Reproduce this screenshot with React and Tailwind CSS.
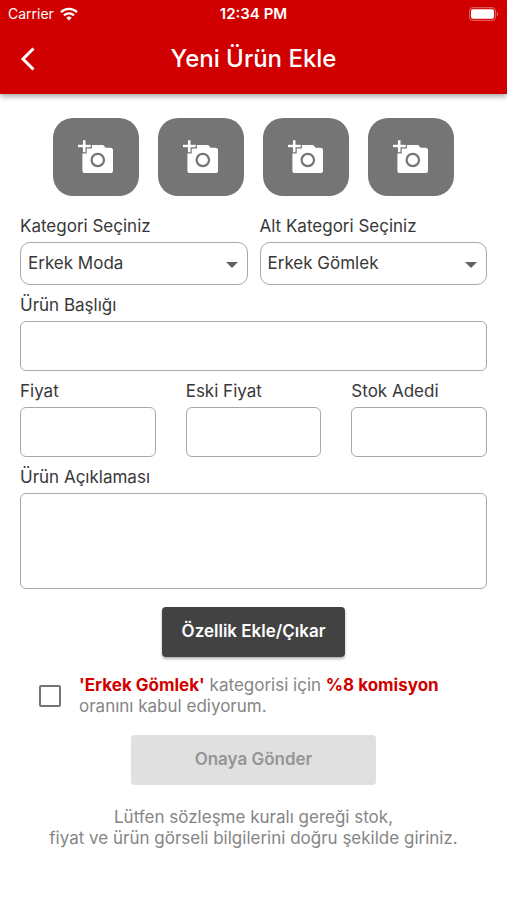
import React, { useState } from 'react'

const photoSlots = [1, 2, 3, 4];

const WifiIcon = () => (
    <svg className="w-[18px] h-[14px]" viewBox="0 0 18 14" fill="none" stroke="white" strokeWidth="2.4" aria-hidden="true">
        <path d="M1 5.2a11.4 11.4 0 0 1 16 0" />
        <path d="M4 8.4a7.2 7.2 0 0 1 10 0" />
        <path d="M9 13.6 6.3 10.9a3.9 3.9 0 0 1 5.4 0z" fill="white" stroke="none" />
    </svg>
);

const BatteryIcon = () => (
    <svg className="w-[30px] h-[14px]" viewBox="0 0 30 14" fill="none" aria-hidden="true">
        <rect x="0.6" y="0.6" width="25.8" height="12.8" rx="3.6" stroke="white" strokeOpacity="0.35" strokeWidth="1.2" />
        <rect x="2" y="2.2" width="23" height="9.6" rx="2" fill="white" />
        <path d="M27.8 4.8a2.4 2.4 0 0 1 0 4.4z" fill="white" fillOpacity="0.4" />
    </svg>
);

const AddPhotoIcon = () => (
    <svg className="w-9 h-9" viewBox="0 0 36 36" aria-hidden="true">
        <path fill="white" d="M9 6h15.500a2 2 0 0 1 1.500.700L27.600 8.800h4.800A2.600 2.600 0 0 1 35 11.400v20A2.600 2.600 0 0 1 32.400 34H7a2.600 2.600 0 0 1-2.600-2.600V14z" />
        <path fill="white" stroke="#757575" strokeWidth="1.2" d="M4.300 .6h3.800v4.600h5.200v3.600H8.100v5H4.300v-5H-.6V5.200h4.900z" />
        <circle cx="19.800" cy="21" r="6.200" fill="white" stroke="#757575" strokeWidth="2.200" />
    </svg>
);

const Field = ({ id, label, children }) => (
    <div className="flex-1 min-w-0">
        <label htmlFor={id} className="block mb-1.5 text-[17px] leading-5">{label}</label>
        {children}
    </div>
);

const SelectBox = ({ id, options }) => (
    <div className="relative">
        <select id={id} className="block w-full h-[43px] pl-[7px] pr-8 appearance-none rounded-[10px] border border-[#a8a8a8] bg-white text-[17px]">
            {options.map((item) => (
                <option key={item}>{item}</option>
            ))}
        </select>
        <svg className="absolute right-2.5 top-5 w-3 h-1.5 pointer-events-none" viewBox="0 0 12 6" aria-hidden="true">
            <path d="M0 0h12L6 6z" fill="#616161" />
        </svg>
    </div>
);

const TextBox = ({ id }) => (
    <input id={id} type="text" className="block w-full h-[50px] px-2 rounded-md border border-[#a8a8a8] bg-white text-[17px]" />
);

const App = () => {
    const [accepted, setAccepted] = useState(false);

    return (
        <div className="min-h-screen bg-white font-['Inter',sans-serif] text-[17px] text-[#383838]">
            <header className="bg-[#d00000] text-white shadow-[0_2px_6px_rgba(0,0,0,0.4)]">
                <div className="grid grid-cols-3 items-center h-7 px-2 text-sm">
                    <div className="flex items-center gap-1.5">
                        <span>Carrier</span>
                        <WifiIcon />
                    </div>
                    <span className="text-center text-[15px] font-semibold">12:34 PM</span>
                    <div className="flex justify-end"><BatteryIcon /></div>
                </div>
                <div className="grid grid-cols-[60px_1fr_60px] items-center h-[66px] pb-1">
                    <button type="button" aria-label="Geri" className="pl-5">
                        <svg className="w-4 h-6" viewBox="0 0 16 24" fill="none" stroke="white" strokeWidth="3" aria-hidden="true">
                            <path d="M13.500 1.500 3 12l10.500 10.500" />
                        </svg>
                    </button>
                    <h1 className="text-center text-2xl font-medium">Yeni Ürün Ekle</h1>
                </div>
            </header>

            <form className="px-5 pt-6 pb-8" onSubmit={(e) => e.preventDefault()}>
                <div className="flex justify-center gap-[19px]">
                    {photoSlots.map((slot) => (
                        <button key={slot} type="button" aria-label={`Fotoğraf ${slot}`} className="flex items-center justify-center w-[86px] h-[78px] rounded-[20px] bg-[#757575]">
                            <AddPhotoIcon />
                        </button>
                    ))}
                </div>

                <div className="flex flex-col gap-2.5 mt-5">
                    <div className="flex gap-3">
                        <Field id="category" label="Kategori Seçiniz">
                            <SelectBox id="category" options={['Erkek Moda']} />
                        </Field>
                        <Field id="subcategory" label="Alt Kategori Seçiniz">
                            <SelectBox id="subcategory" options={['Erkek Gömlek']} />
                        </Field>
                    </div>
                    <Field id="title" label="Ürün Başlığı">
                        <TextBox id="title" />
                    </Field>
                    <div className="flex gap-[30px]">
                        <Field id="price" label="Fiyat">
                            <TextBox id="price" />
                        </Field>
                        <Field id="oldPrice" label="Eski Fiyat">
                            <TextBox id="oldPrice" />
                        </Field>
                        <Field id="stock" label="Stok Adedi">
                            <TextBox id="stock" />
                        </Field>
                    </div>
                    <Field id="description" label="Ürün Açıklaması">
                        <textarea id="description" className="block w-full h-24 p-2 resize-none rounded-md border border-[#a8a8a8] bg-white" />
                    </Field>
                </div>

                <div className="flex justify-center mt-[18px]">
                    <button type="button" className="h-[50px] px-5 rounded bg-[#424242] font-semibold text-white shadow-[0_2px_3px_rgba(0,0,0,0.3)]">
                        Özellik Ekle/Çıkar
                    </button>
                </div>

                <div className="flex items-center gap-[18px] mt-[18px] pl-[19px]">
                    <input
                        id="accept"
                        type="checkbox"
                        checked={accepted}
                        onChange={(e) => setAccepted(e.target.checked)}
                        className="w-[22px] h-[22px] shrink-0 appearance-none rounded-xs border-2 border-[#757575] checked:bg-[#d00000]"
                    />
                    <label htmlFor="accept" className="leading-[21px] text-[#858585]">
                        <b className="font-bold text-[#d00000]">'Erkek Gömlek'</b> kategorisi için <b className="font-bold text-[#d00000]">%8 komisyon</b>
                        <br />
                        oranını kabul ediyorum.
                    </label>
                </div>

                <div className="flex justify-center mt-[18px]">
                    <button type="submit" disabled={!accepted} className="h-[50px] px-16 rounded bg-[#e0e0e0] font-semibold text-[#959595]">
                        Onaya Gönder
                    </button>
                </div>

                <p className="mt-[22px] text-center leading-[21px] text-[#858585]">
                    Lütfen sözleşme kuralı gereği stok,
                    <br />
                    fiyat ve ürün görseli bilgilerini doğru şekilde giriniz.
                </p>
            </form>
        </div>
    )
}

export default App;
